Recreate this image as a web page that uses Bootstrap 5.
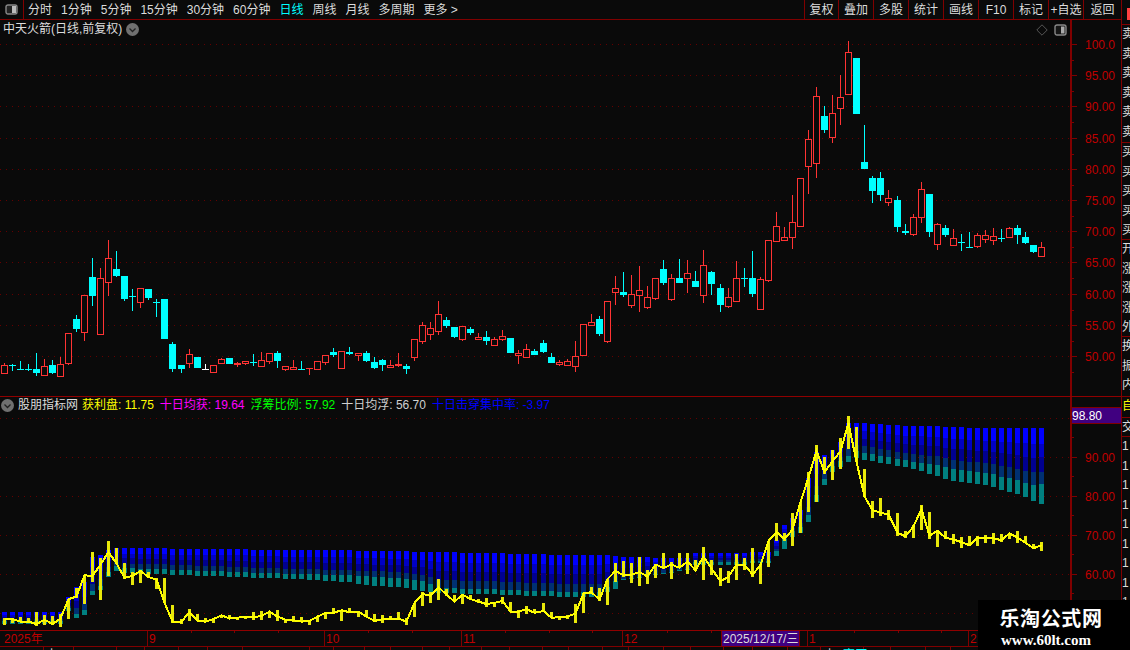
<!DOCTYPE html>
<html lang="zh-CN">
<head>
<meta charset="utf-8">
<title>中天火箭</title>
<link href="https://cdn.jsdelivr.net/npm/bootstrap@5.3.0/dist/css/bootstrap.min.css" rel="stylesheet">
<style>
html,body{height:650px;overflow:hidden;background:#0a0a0a}
body{font:12px/16px "Liberation Sans","Noto Sans CJK SC",sans-serif;color:#dcdcdc}
.term{width:1130px;height:650px}
.leftcol{width:1121px}
.sidecol{width:9px;border-left:1px solid #800000;overflow:hidden}
.topbar{height:20px;border-bottom:1px solid #800000;line-height:20px}
.logo-box{width:24px;border-right:1px solid #800000;margin-right:4px}
.tabgap{gap:9px}
.tab-on{color:#00ffff}
.tool{width:35px;text-align:center;border-left:1px solid #800000;white-space:nowrap}
.tool-first{width:34px}
.tool-last{width:38px}
.pane-main{height:377px;border-bottom:1px solid #900000}
.pane-ind{height:234px;border-bottom:1px solid #900000}
.plot{width:1070px}
.chart-svg{display:block}
.pane-title{top:1px;left:3px;gap:4px;white-space:nowrap}
.pane-tools{top:4px;right:3px;gap:6px}
.ind-title{top:0;left:1px;white-space:nowrap;line-height:17px}
.ind-name{margin:0 4px}
.seg{margin-right:6px}
.c-y{color:#ffff00}.c-m{color:#ff00ff}.c-g{color:#00ff00}.c-w{color:#d0d0d0}.c-b{color:#0000ff}
.side-sec{border-bottom:1px solid #800000;line-height:19.5px;overflow:hidden;width:12px;text-align:left}
.sec-0{height:25px}
.sec-1{height:118px}
.sec-2{height:97px}
.sec-3{height:97px}
.sec-4{height:60px}
.sec-5{height:21px;color:#ffff00}
.sec-6{height:19px}
.sec-7{height:212px;border-bottom:0}
.redflag{height:12px;width:3px;margin:8px 0 0 5px;background:#ff4040}
.wmark{right:0;bottom:0;width:152px;height:50px;background:#000;color:#fff;text-align:center;font-weight:700;padding:7px 0 0}
.wm-cn{font:700 20px/22px "Noto Sans CJK SC","Liberation Serif",serif;letter-spacing:.6px;margin-right:6px}
.wm-url{font:700 15px/16px "Liberation Serif",serif;margin-top:3px;margin-right:16px}
</style>
</head>
<body>
<div class="term d-flex position-relative">
  <div class="leftcol d-flex flex-column">
    <div class="topbar d-flex">
      <div class="logo-box d-flex align-items-center justify-content-center">
        <svg width="13" height="11" viewBox="0 0 13 11"><rect x="1" y="1" width="11" height="9" rx="2" fill="#222" stroke="#888" stroke-width="1.4"/><rect x="7" y="2" width="4" height="7" fill="#bbb"/></svg>
      </div>
      <div class="d-flex tabgap">
        <span>分时</span><span>1分钟</span><span>5分钟</span><span>15分钟</span><span>30分钟</span><span>60分钟</span><span class="tab-on">日线</span><span>周线</span><span>月线</span><span>多周期</span><span>更多 &gt;</span>
      </div>
      <div class="d-flex ms-auto">
        <span class="tool tool-first">复权</span><span class="tool">叠加</span><span class="tool">多股</span><span class="tool">统计</span><span class="tool">画线</span><span class="tool">F10</span><span class="tool">标记</span><span class="tool">+自选</span><span class="tool tool-last">返回</span>
      </div>
    </div>

    <div class="pane-main d-flex">
      <div class="plot position-relative">
        <svg id="mainPlot" class="chart-svg" width="1070" height="376" viewBox="0 20 1070 376" shape-rendering="crispEdges"></svg>
        <div class="pane-title position-absolute d-flex align-items-center">
          <span>中天火箭(日线,前复权)</span>
          <svg width="13" height="13" viewBox="0 0 13 13"><circle cx="6.5" cy="6.5" r="6.5" fill="#707070"/><path d="M3.5 5.5 6.5 8.5 9.5 5.5" fill="none" stroke="#222" stroke-width="1.3"/></svg>
        </div>
        <div class="pane-tools position-absolute d-flex align-items-center">
          <svg width="12" height="12" viewBox="0 0 12 12"><path d="M6 .8 11.2 6 6 11.2 .8 6Z" fill="none" stroke="#555"/></svg>
          <svg width="13" height="12" viewBox="0 0 13 12"><rect x="1" y="1" width="11" height="10" rx="2" fill="#161616" stroke="#888" stroke-width="1.4"/><rect x="7" y="2.5" width="3.5" height="7" fill="#aaa"/></svg>
        </div>
      </div>
      <svg id="mainAxis" class="chart-svg" width="51" height="376" viewBox="1070 20 51 376"></svg>
    </div>

    <div class="pane-ind d-flex">
      <div class="plot position-relative">
        <svg id="indPlot" class="chart-svg" width="1070" height="233" viewBox="0 397 1070 233" shape-rendering="crispEdges"></svg>
        <div class="ind-title position-absolute d-flex align-items-center">
          <svg width="13" height="13" viewBox="0 0 13 13"><circle cx="6.5" cy="6.5" r="6.5" fill="#707070"/><path d="M3.5 5.5 6.5 8.5 9.5 5.5" fill="none" stroke="#222" stroke-width="1.3"/></svg>
          <span class="ind-name">股朋指标网</span>
          <span class="seg c-y">获利盘: 11.75</span>
          <span class="seg c-m">十日均获: 19.64</span>
          <span class="seg c-g">浮筹比例: 57.92</span>
          <span class="seg c-w">十日均浮: 56.70</span>
          <span class="seg c-b">十日击穿集中率: -3.97</span>
        </div>
      </div>
      <svg id="indAxis" class="chart-svg" width="51" height="233" viewBox="1070 397 51 233"></svg>
    </div>

    <svg id="timeAxis" class="chart-svg" width="1121" height="19" viewBox="0 631 1121 19"></svg>
  </div>

  <div class="sidecol">
    <div class="side-sec sec-0"><div class="redflag"></div></div>
    <div class="side-sec sec-1">卖<br>卖<br>卖<br>卖<br>卖<br>卖</div>
    <div class="side-sec sec-2">买<br>买<br>买<br>买<br>买</div>
    <div class="side-sec sec-3">开<br>涨<br>涨<br>涨<br>外</div>
    <div class="side-sec sec-4">换<br>振<br>内</div>
    <div class="side-sec sec-5">自</div>
    <div class="side-sec sec-6">交</div>
    <div class="side-sec sec-7">1<br>1<br>1<br>1<br>1<br>1<br>1<br>1<br>1</div>
  </div>

  <div class="wmark position-absolute">
    <div class="wm-cn">乐淘公式网</div>
    <div class="wm-url">www.60lt.com</div>
  </div>
</div>

<script src="https://cdn.jsdelivr.net/npm/bootstrap@5.3.0/dist/js/bootstrap.bundle.min.js"></script>
<script>
// [zoomX, high, bodyTop, bodyBottom, low, kind] in crop coordinates (crop origin, scale 3)
const groups=[
 {ox:0,oy:230,d:[[13,400,406,428,432,'r'],[37,402,406,406,422,'c'],[61,393,418,418,420,'c'],[85,402,418,418,423,'c'],[109,369,417,429,438,'c'],[133,387,409,434,434,'r'],[157,390,405,429,432,'c'],[181,380,403,437,440,'r'],[205,310,310,398,404,'r'],[229,255,267,297,305,'c'],[253,195,195,305,333,'r'],[277,84,141,198,228,'c'],[301,114,145,311,311,'r'],[325,30,85,155,198,'r'],[349,63,117,138,141,'c'],[373,138,138,207,213,'c'],[397,177,199,199,243,'c'],[421,175,175,215,234,'r'],[445,177,177,204,209,'c'],[469,207,217,217,261,'c'],[493,207,207,327,327,'c'],[517,336,342,417,426,'c'],[544,405,405,417,429,'c'],[568,357,373,399,414,'r'],[592,381,381,414,414,'c'],[616,402,418,418,420,'w'],[640,406,406,425,425,'r'],[664,384,388,398,398,'r'],[688,384,384,402,402,'c'],[712,397,398,403,411,'r'],[736,393,394,398,404,'r'],[760,372,397,397,408,'c'],[784,366,391,407,407,'r'],[808,370,370,392,402,'r'],[832,363,369,393,414,'c']]},
 {ox:280,oy:260,d:[[16,318,319,326,332,'r'],[40,300,322,326,327,'r'],[64,303,326,326,330,'c'],[88,324,325,325,345,'r'],[112,304,304,326,326,'r'],[136,286,286,305,315,'r'],[160,264,276,286,291,'c'],[185,274,274,323,323,'r'],[208,261,276,282,285,'c'],[235,280,280,284,303,'r'],[259,273,279,303,306,'c'],[283,291,306,324,327,'c'],[307,297,300,315,333,'c'],[331,300,315,320,320,'r'],[355,279,312,315,321,'r'],[379,312,318,327,342,'c'],[403,238,238,290,303,'r'],[427,186,196,242,252,'r'],[451,186,205,223,240,'r'],[475,123,163,212,225,'r'],[499,171,180,198,204,'c'],[523,201,201,231,234,'c'],[547,198,199,236,243,'r'],[571,202,207,219,225,'c'],[595,220,232,236,237,'r'],[619,213,231,243,255,'c'],[643,232,238,254,254,'r'],[667,210,229,236,243,'r'],[691,234,234,279,279,'c'],[715,270,279,284,312,'r'],[739,252,268,290,290,'r'],[763,267,273,285,285,'c'],[790,240,249,276,279,'c'],[814,279,291,309,309,'c'],[838,300,306,312,318,'r'],[862,297,304,315,315,'r'],[886,243,289,317,336,'r']]},
 {ox:580,oy:220,d:[[10,313,313,404,404,'r'],[34,282,307,314,314,'r'],[58,289,297,342,348,'c'],[82,244,244,362,369,'r'],[106,168,205,215,255,'r'],[130,156,216,225,231,'c'],[154,165,223,254,263,'r'],[178,138,211,224,276,'r'],[202,198,232,260,267,'r'],[226,175,175,234,240,'r'],[250,120,147,189,195,'c'],[274,162,175,236,243,'r'],[298,117,174,189,189,'c'],[322,120,160,173,219,'r'],[346,153,183,201,201,'c'],[370,90,136,224,249,'r'],[394,153,156,192,225,'c'],[421,192,204,255,276,'c'],[445,204,232,257,264,'r'],[469,123,175,242,246,'r'],[493,144,175,175,201,'c'],[517,93,174,222,231,'c'],[541,171,178,266,266,'r'],[565,61,61,179,186,'r'],[589,-24,19,62,62,'r']]},
 {ox:780,oy:30,d:[[13,591,622,629,632,'r'],[37,495,577,622,657,'r'],[61,445,445,587,590,'r'],[85,300,328,409,491,'r'],[109,171,199,400,443,'r'],[133,229,258,299,308,'c'],[157,195,250,322,339,'r'],[181,135,202,233,285,'r'],[205,33,67,193,193,'r'],[229,84,84,252,252,'c'],[253,285,396,416,416,'c'],[277,438,444,483,519,'c'],[301,426,444,495,513,'c'],[325,480,504,517,528,'r'],[352,498,510,591,606,'c'],[376,582,603,609,615,'c'],[400,552,562,611,618,'r'],[424,456,478,560,579,'r'],[448,492,492,606,621,'c'],[472,579,583,643,660,'r'],[496,585,594,615,621,'c'],[520,597,625,644,644,'r'],[544,612,636,636,663,'c'],[568,606,652,652,654,'c'],[592,609,616,647,654,'r'],[616,600,616,626,639,'r'],[640,594,619,629,645,'r'],[664,597,625,628,636,'c'],[688,591,595,620,620,'r'],[712,585,594,614,642,'c'],[736,606,621,639,642,'c'],[760,645,645,666,669,'c'],[784,636,652,677,677,'r']]}
];
const candles=[];
groups.forEach(g=>g.d.forEach(a=>candles.push({
  p:g.ox+Math.floor(a[0]/3),
  hi:Math.round(g.oy+a[1]/3),top:Math.round(g.oy+a[2]/3),bot:Math.round(g.oy+a[3]/3),lo:Math.round(g.oy+a[4]/3),
  k:a[5]})));
const COL={r:'#ff3333',c:'#00ffff',w:'#ffffff'},GRID='#640000',LBL='#c00000',AX='#800000';

function dotted(y,x2){return `<line x1="0" x2="${x2}" y1="${y+.5}" y2="${y+.5}" stroke="${GRID}" stroke-dasharray="1 5"/>`}
const mainY=[44,75,106,138,169,200,231,262,294,325,356];

// main chart
let s='';
mainY.forEach(y=>s+=dotted(y,1070));
candles.forEach(c=>{
  const col=COL[c.k],x=c.p;
  s+=`<line x1="${x+.5}" x2="${x+.5}" y1="${c.hi}" y2="${c.lo}" stroke="${col}"/>`;
  if(c.top===c.bot) s+=`<rect x="${x-3}" y="${c.top}" width="7" height="1" fill="${col}"/>`;
  else if(c.k==='r') s+=`<rect x="${x-3+.5}" y="${c.top+.5}" width="6" height="${c.bot-c.top}" fill="#0a0a0a" stroke="${col}"/>`;
  else s+=`<rect x="${x-3}" y="${c.top}" width="7" height="${c.bot-c.top}" fill="${col}"/>`;
});
document.getElementById('mainPlot').innerHTML=s;

// main axis
s=`<rect x="1070" y="20" width="2" height="376" fill="${AX}"/>`;
const prices=['100.0','95.00','90.00','85.00','80.00','75.00','70.00','65.00','60.00','55.00','50.00'];
prices.forEach((t,k)=>{
  const y=mainY[k];
  s+=`<rect x="1071" y="${y}" width="6" height="1" fill="${AX}"/><rect x="1071" y="${y+16}" width="3" height="1" fill="${AX}"/>`;
  s+=`<text x="1085" y="${y+4.5}" fill="${LBL}" font-size="12">${t}</text>`;
});
document.getElementById('mainAxis').innerHTML=s;

// indicator
const mapY=y=>418.3+0.6261*(y-44.3);
const kf=[[0,612,624,3],[7,612,624,3],[8,597,611,3],[9,587,618,4],[10,582,615,5],[11,557,595,4],[12,555,590,4],[13,550,577,5],[14,548,571,5],[15,548,573,5],[36,550,579,5],[43,550,582,7],[45,551,585,9],[50,551,588,9],[52,552,591,10],[54,552,593,5],[60,553,594,5],[70,555,597,5],[74,555,597,5],[75,555,592,5],[76,556,589,8],[77,557,580,1],[85,558,570,1],[86,553,565,3],[92,553,565,3],[93,552,563,2],[95,552,563,2],[96,540,556,5],[97,525,549,10],[98,518,537,6],[99,510,533,6],[100,478,522,7],[101,452,502,7],[102,455,485,6],[103,450,472,6],[104,442,467,6],[105,423,462,6],[106,423,458,7],[113,426,469,7],[116,426,476,11],[118,427,481,12],[122,428,485,12],[126,428,494,14],[127,428,497,14],[128,428,501,16],[129,428,504,20]];
function interp(i){
  for(let n=0;n<kf.length-1;n++){const a=kf[n],b=kf[n+1];
    if(i>=a[0]&&i<=b[0]){const t=(i-a[0])/(b[0]-a[0]);return [1,2,3].map(j=>a[j]+(b[j]-a[j])*t)}}
  return kf[kf.length-1].slice(1);
}
s='';
[418,457,496,535,574,613].forEach(y=>s+=dotted(y,1070));
candles.forEach((c,i)=>{
  const [T,B,tl]=interp(i),t=Math.round(T),b=Math.round(B),te=Math.round(tl),h=b-te-t;
  const cuts=[[0,.28,'#0000ff'],[.28,.52,'#0000c4'],[.52,.78,'#000090'],[.78,1,'#003072']];
  cuts.forEach(q=>{const y0=t+Math.round(h*q[0]),y1=t+Math.round(h*q[1]);
    s+=`<rect x="${c.p-2}" y="${y0}" width="5" height="${y1-y0}" fill="${q[2]}"/>`});
  s+=`<rect x="${c.p-2}" y="${b-te}" width="5" height="${te}" fill="#008080"/>`;
});
candles.forEach(c=>{
  const y0=Math.round(mapY(c.hi)),y1=Math.round(mapY(c.lo));
  s+=`<rect x="${c.p-1}" y="${y0}" width="3" height="${y1-y0}" fill="#e8e80a"/>`;
});
const pts=candles.map(c=>{const cl=(c.k==='c'||c.k==='w')?c.bot:c.top;return `${c.p+.5},${mapY(cl).toFixed(1)}`}).join(' ');
s+=`<polyline points="${pts}" fill="none" stroke="#ffff00" stroke-width="2"/>`;
document.getElementById('indPlot').innerHTML=s;

s=`<rect x="1070" y="397" width="2" height="233" fill="${AX}"/>`;
s+=`<rect x="1071" y="407" width="50" height="1" fill="${AX}"/><rect x="1072" y="408" width="49" height="15" fill="#400080"/><rect x="1071" y="423" width="50" height="1" fill="${AX}"/>`;
s+=`<text x="1072" y="419.5" fill="#fff" font-size="12">98.80</text>`;
[[90,457],[80,496],[70,535],[60,574]].forEach(a=>{
  s+=`<rect x="1071" y="${a[1]}" width="6" height="1" fill="${AX}"/><rect x="1071" y="${a[1]+19}" width="3" height="1" fill="${AX}"/>`;
  s+=`<text x="1085" y="${a[1]+4.5}" fill="${LBL}" font-size="12">${a[0]}.00</text>`;
});
s+=`<rect x="1071" y="437" width="3" height="1" fill="${AX}"/>`;
document.getElementById('indAxis').innerHTML=s;

// time axis
s='';
const lbl=(x,t)=>`<text x="${x}" y="642.5" fill="${LBL}" font-size="12">${t}</text>`;
s+=`<g shape-rendering="crispEdges">`;
[147,324,461,622,721,799,807,968].forEach(x=>s+=`<rect x="${x}" y="631" width="1" height="15" fill="${AX}"/>`);
[191,234,278,368,412,505,549,592,667,711,854,898,941,1010,1054].forEach(x=>s+=`<rect x="${x}" y="631" width="1" height="2" fill="${AX}"/>`);
s+=`<rect x="0" y="646" width="1121" height="1" fill="${AX}"/>`;
[43,73,116,144,178,207,242,309,333,364,390,422,449,481,509,542,568,602,628,663,690,723,752,787,820,863,890,925,950,985,1015,1048,1085].forEach(x=>s+=`<rect x="${x}" y="647" width="1" height="3" fill="${AX}"/>`);
s+=`<rect x="722" y="631" width="77" height="15" fill="#400080"/></g>`;
s+=lbl(4,'2025年')+lbl(149,'9')+lbl(326,'10')+lbl(463,'11')+lbl(624,'12')+lbl(809,'1')+lbl(970,'2');
s+=`<text x="723" y="642.5" fill="#ddd" font-size="12">2025/12/17/三</text>`;
s+=`<text x="8" y="659" fill="#ddd" font-size="12">##</text><text x="46" y="659" fill="#ddd" font-size="12">上</text><text x="824" y="659" fill="#ddd" font-size="12">上</text><text x="843" y="659" fill="#00ffff" font-size="12">高压</text>`;
document.getElementById('timeAxis').innerHTML=s;
</script>
</body>
</html>
